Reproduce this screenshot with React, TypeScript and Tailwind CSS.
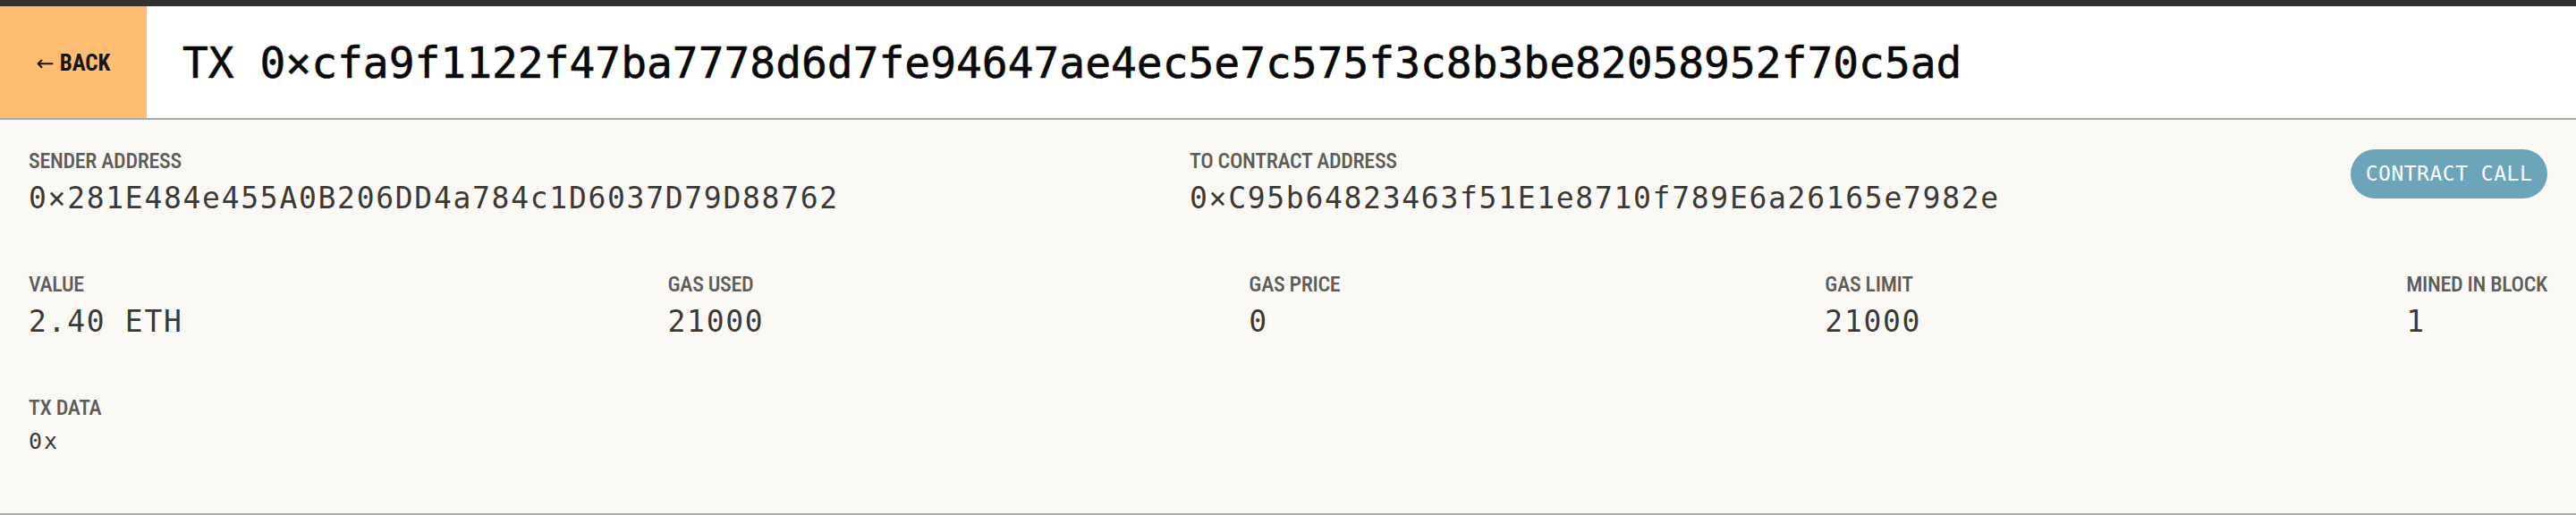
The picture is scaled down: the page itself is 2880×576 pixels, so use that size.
import React from "react";

const mono = "font-['DejaVu_Sans_Mono',monospace]";
const label =
  "font-['Roboto_Condensed','Roboto',sans-serif] text-[24px] leading-[28px] font-medium tracking-[-0.3px] uppercase text-[#5e5c57]";
const value = `${mono} text-[33px] leading-[40px] tracking-[1.7px] text-[#3b3936] mt-2`;

function Field({ name, val }: { name: string; val: string }) {
  return (
    <div className="flex flex-col">
      <div className={label}>{name}</div>
      <div className={value}>{val}</div>
    </div>
  );
}

export default function App() {
  return (
    <div className="flex h-[576px] w-full flex-col bg-[#faf9f6]">
      {/* top nav remnant */}
      <div className="h-[7px] bg-[#34302d]" />

      <div className="flex h-[127px] items-stretch border-b-2 border-[#a9a9a9] bg-white">
        <button className="flex w-[164px] items-center justify-center bg-[#ffbd72] pt-[2px] font-['Roboto_Condensed','Roboto',sans-serif] text-[25px] font-bold text-[#151515]">
          <span className="mr-[6px] font-['DejaVu_Sans',sans-serif] text-[24px] font-normal">←</span>
          BACK
        </button>
        <h1
          className={`${mono} ml-[40px] flex items-center pt-[3px] text-[47.9px] text-[#0a0a0a] [-webkit-text-stroke:0.6px_#0a0a0a]`}
        >
          TX 0×cfa9f1122f47ba7778d6d7fe94647ae4ec5e7c575f3c8b3be82058952f70c5ad
        </h1>
      </div>

      <div className="flex flex-1 flex-col border-b-2 border-[#a9a9a9] px-8 pt-[32px]">
        <div className="flex items-start justify-between">
          <Field name="Sender Address" val="0×281E484e455A0B206DD4a784c1D6037D79D88762" />
          <Field name="To Contract Address" val="0×C95b64823463f51E1e8710f789E6a26165e7982e" />
          <div
            className={`${mono} mt-[1px] flex h-[55px] w-[220px] items-center justify-center rounded-full bg-[#6ca4ba] text-[23px] tracking-[0.5px] text-white`}
          >
            CONTRACT CALL
          </div>
        </div>

        <div className="mt-[62px] flex items-start justify-between">
          <Field name="Value" val="2.40 ETH" />
          <Field name="Gas Used" val="21000" />
          <Field name="Gas Price" val="0" />
          <Field name="Gas Limit" val="21000" />
          <Field name="Mined In Block" val="1" />
        </div>

        <div className="mt-[62px] flex flex-col">
          <div className={label}>TX Data</div>
          <div className={`${mono} mt-2 text-[25px] leading-[32px] tracking-[2px] text-[#3b3936]`}>0x</div>
        </div>
      </div>
    </div>
  );
}
